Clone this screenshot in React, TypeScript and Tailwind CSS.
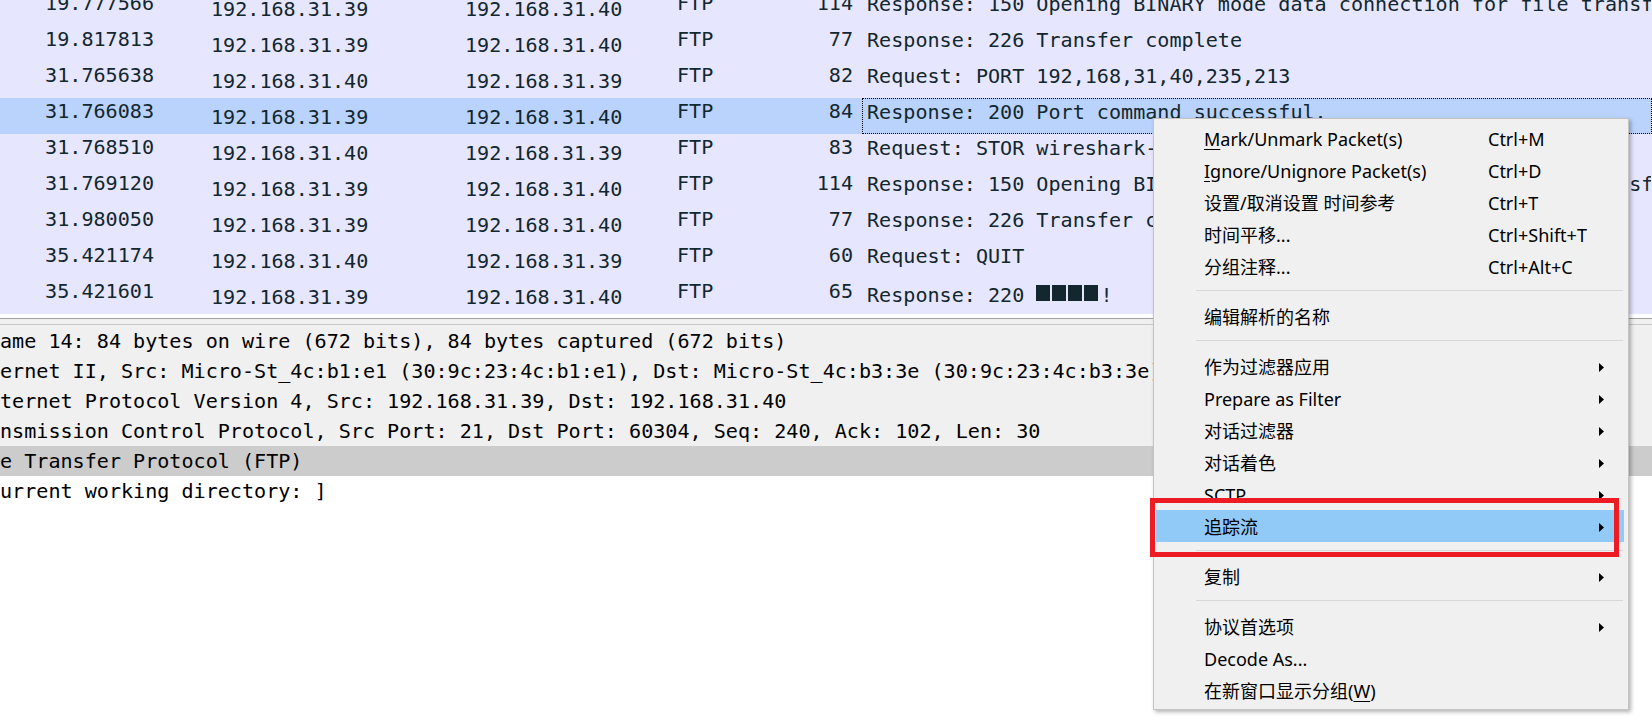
import React from "react";

type Packet = {
  time: string;
  src: string;
  dst: string;
  proto: string;
  len: string;
  info: React.ReactNode;
};

const packets: Packet[] = [
  { time: "19.777566", src: "192.168.31.39", dst: "192.168.31.40", proto: "FTP", len: "114", info: "Response: 150 Opening BINARY mode data connection for file transfer." },
  { time: "19.817813", src: "192.168.31.39", dst: "192.168.31.40", proto: "FTP", len: "77", info: "Response: 226 Transfer complete" },
  { time: "31.765638", src: "192.168.31.40", dst: "192.168.31.39", proto: "FTP", len: "82", info: "Request: PORT 192,168,31,40,235,213" },
  { time: "31.766083", src: "192.168.31.39", dst: "192.168.31.40", proto: "FTP", len: "84", info: "Response: 200 Port command successful." },
  { time: "31.768510", src: "192.168.31.40", dst: "192.168.31.39", proto: "FTP", len: "83", info: "Request: STOR wireshark-capture.txt" },
  { time: "31.769120", src: "192.168.31.39", dst: "192.168.31.40", proto: "FTP", len: "114", info: "Response: 150 Opening BINARY mode data connection for file transfer." },
  { time: "31.980050", src: "192.168.31.39", dst: "192.168.31.40", proto: "FTP", len: "77", info: "Response: 226 Transfer complete" },
  { time: "35.421174", src: "192.168.31.40", dst: "192.168.31.39", proto: "FTP", len: "60", info: "Request: QUIT" },
  {
    time: "35.421601",
    src: "192.168.31.39",
    dst: "192.168.31.40",
    proto: "FTP",
    len: "65",
    info: (
      <>
        {"Response: 220 "}
        {[0, 1, 2, 3].map((i) => (
          <span key={i} className="mt-[3px] mr-[2px] inline-block h-[16px] w-[14px] bg-[#12272e] align-top" />
        ))}
        !
      </>
    ),
  },
];

const details = [
  "ame 14: 84 bytes on wire (672 bits), 84 bytes captured (672 bits)",
  "ernet II, Src: Micro-St_4c:b1:e1 (30:9c:23:4c:b1:e1), Dst: Micro-St_4c:b3:3e (30:9c:23:4c:b3:3e)",
  "ternet Protocol Version 4, Src: 192.168.31.39, Dst: 192.168.31.40",
  "nsmission Control Protocol, Src Port: 21, Dst Port: 60304, Seq: 240, Ack: 102, Len: 30",
  "e Transfer Protocol (FTP)",
  "urrent working directory: ]",
];

function PacketRow({ p, selected, last }: { p: Packet; selected: boolean; last: boolean }) {
  return (
    <div className={`flex h-[36px] ${selected ? "bg-[#bad3fc]" : ""}`}>
      <div className="w-[160px] shrink-0 pr-[6px] text-right leading-[27px]">{p.time}</div>
      <div className="w-[254px] shrink-0 pl-[51px] pt-[4px] leading-[30px]">{p.src}</div>
      <div className="w-[212px] shrink-0 pl-[51px] pt-[4px] leading-[30px]">{p.dst}</div>
      <div className="w-[144px] shrink-0 pl-[51px] leading-[27px]">{p.proto}</div>
      <div className="w-[92px] shrink-0 pr-[9px] text-right leading-[27px]">{p.len}</div>
      <div
        className={`min-w-0 flex-1 overflow-hidden whitespace-pre border border-dotted pl-[4px] leading-[26px] ${
          selected ? "border-black" : "border-transparent"
        } ${last ? "pt-[3px]" : ""}`}
      >
        {p.info}
      </div>
    </div>
  );
}

function Arrow() {
  return (
    <svg width="5" height="9" viewBox="0 0 5 9" className="shrink-0">
      <polygon points="0,0 5,4.5 0,9" fill="#000" />
    </svg>
  );
}

function MenuItem({
  label,
  shortcut,
  arrow,
  active,
}: {
  label: React.ReactNode;
  shortcut?: string;
  arrow?: boolean;
  active?: boolean;
}) {
  return (
    <div className={`ml-[2px] mr-[4px] flex h-[32px] items-center pt-[2px] ${active ? "bg-[#91c9f7]" : ""}`}>
      <div className="w-[332px] shrink-0 whitespace-nowrap pl-[48px]">{label}</div>
      <div className="w-[111px] shrink-0 whitespace-nowrap">{shortcut}</div>
      {arrow && <Arrow />}
    </div>
  );
}

function Sep() {
  return <div className="mt-[8px] mb-[9px] ml-[42px] mr-[5px] h-px bg-[#d7d7d7]" />;
}

function ContextMenu() {
  return (
    <div className="absolute left-[1153px] top-[118px] w-[476px] border border-[#c4c4c4] bg-[#f0f0f0] pt-[3px] pb-[3px] font-['Noto_Sans','Noto_Sans_CJK_SC',sans-serif] text-[18px] text-black shadow-[2px_2px_4px_rgba(0,0,0,0.3)]">
      <MenuItem
        label={
          <>
            <span className="underline underline-offset-[3px]">M</span>ark/Unmark Packet(s)
          </>
        }
        shortcut="Ctrl+M"
      />
      <MenuItem
        label={
          <>
            <span className="underline underline-offset-[3px]">I</span>gnore/Unignore Packet(s)
          </>
        }
        shortcut="Ctrl+D"
      />
      <MenuItem label="设置/取消设置 时间参考" shortcut="Ctrl+T" />
      <MenuItem label="时间平移..." shortcut="Ctrl+Shift+T" />
      <MenuItem label="分组注释..." shortcut="Ctrl+Alt+C" />
      <Sep />
      <MenuItem label="编辑解析的名称" />
      <Sep />
      <MenuItem label="作为过滤器应用" arrow />
      <MenuItem label="Prepare as Filter" arrow />
      <MenuItem label="对话过滤器" arrow />
      <MenuItem label="对话着色" arrow />
      <MenuItem label="SCTP" arrow />
      <MenuItem label="追踪流" arrow active />
      <Sep />
      <MenuItem label="复制" arrow />
      <Sep />
      <MenuItem label="协议首选项" arrow />
      <MenuItem label="Decode As..." />
      <MenuItem
        label={
          <>
            在新窗口显示分组(<span className="underline underline-offset-[3px]">W</span>)
          </>
        }
      />
    </div>
  );
}

export default function App() {
  return (
    <div className="relative h-[727px] w-[1652px] overflow-hidden bg-white font-['DejaVu_Sans_Mono',monospace] text-[20.1px] text-[#12272e]">
      {/* packet list */}
      <div className="h-[314px] overflow-hidden bg-[#e7e6ff]">
        <div className="-mt-[10px]">
          {packets.map((p, i) => (
            <PacketRow key={i} p={p} selected={i === 3} last={i === packets.length - 1} />
          ))}
        </div>
      </div>

      {/* splitter */}
      <div className="h-[4px] bg-white" />
      <div className="h-px bg-[#a0a0a0]" />
      <div className="h-[5px] bg-[#f0f0f0]" />
      <div className="h-px bg-[#c8c8c8]" />

      {/* packet details */}
      <div className="bg-[#f0f0f0] pt-px text-black">
        {details.map((d, i) => (
          <div
            key={i}
            className={`h-[30px] overflow-hidden whitespace-pre leading-[30px] ${
              i === 4 ? "bg-[#cccccc]" : i > 4 ? "bg-white" : ""
            }`}
          >
            {d}
          </div>
        ))}
      </div>

      <ContextMenu />

      {/* annotation */}
      <div className="absolute left-[1150px] top-[498px] h-[59px] w-[469px] border-[5px] border-[#ed1c24]" />
    </div>
  );
}
